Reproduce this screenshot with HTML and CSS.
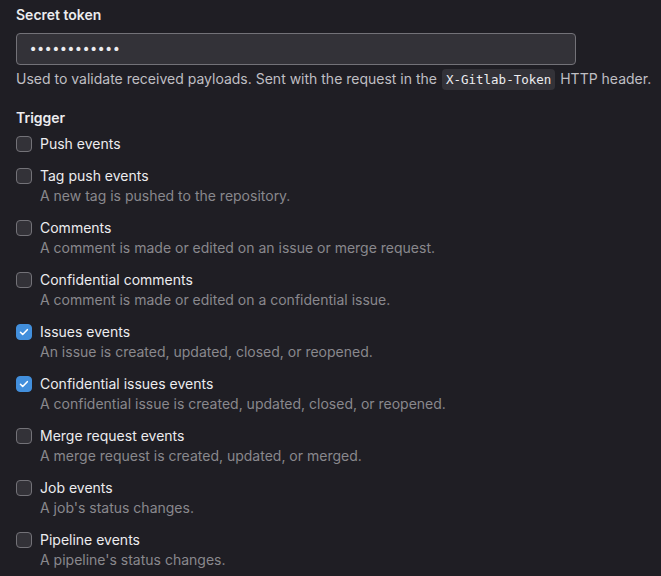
FILE: index.html
```html
<!DOCTYPE html>
<html>
<head>
<meta charset="utf-8">
<link rel="stylesheet" href="styles.css">
</head>
<body>
<div class="page">
  <div class="group">
    <label class="group-label">Secret token</label>
    <input class="field" type="password" value="••••••••••••" readonly>
    <p class="help">Used to validate received payloads. Sent with the request in the <code>X-Gitlab-Token</code> HTTP header.</p>
  </div>
  <div class="group trigger">
    <div class="group-label">Trigger</div>
    <ul class="checks">
      <li class="check"><span class="box"></span><div><div class="name">Push events</div></div></li>
      <li class="check"><span class="box"></span><div><div class="name">Tag push events</div><div class="desc">A new tag is pushed to the repository.</div></div></li>
      <li class="check"><span class="box"></span><div><div class="name">Comments</div><div class="desc">A comment is made or edited on an issue or merge request.</div></div></li>
      <li class="check"><span class="box"></span><div><div class="name">Confidential comments</div><div class="desc">A comment is made or edited on a confidential issue.</div></div></li>
      <li class="check"><span class="box on"><svg viewBox="0 0 16 16" width="16" height="16"><path d="M4.5 8.3l2.2 2.2 4.6-4.8" fill="none" stroke="#fff" stroke-width="1.6" stroke-linecap="round" stroke-linejoin="round"/></svg></span><div><div class="name">Issues events</div><div class="desc">An issue is created, updated, closed, or reopened.</div></div></li>
      <li class="check"><span class="box on"><svg viewBox="0 0 16 16" width="16" height="16"><path d="M4.5 8.3l2.2 2.2 4.6-4.8" fill="none" stroke="#fff" stroke-width="1.6" stroke-linecap="round" stroke-linejoin="round"/></svg></span><div><div class="name">Confidential issues events</div><div class="desc">A confidential issue is created, updated, closed, or reopened.</div></div></li>
      <li class="check"><span class="box"></span><div><div class="name">Merge request events</div><div class="desc">A merge request is created, updated, or merged.</div></div></li>
      <li class="check"><span class="box"></span><div><div class="name">Job events</div><div class="desc">A job's status changes.</div></div></li>
      <li class="check"><span class="box"></span><div><div class="name">Pipeline events</div><div class="desc">A pipeline's status changes.</div></div></li>
    </ul>
  </div>
</div>
</body>
</html>
```
FILE: styles.css
```css
html, body {
  margin: 0;
  padding: 0;
  background: #1f1e24;
}
body {
  font-family: Inter, "Noto Sans", "Liberation Sans", sans-serif;
  font-size: 14px;
  line-height: 20px;
  color: #ececef;
}
.page {
  padding: 5px 16px 0 16px;
}
.group-label {
  display: block;
  font-weight: 600;
  color: #ececef;
}
.field {
  display: block;
  box-sizing: border-box;
  width: 560px;
  height: 32px;
  margin-top: 8px;
  padding: 0 12px;
  background: #333238;
  border: 1px solid #737278;
  border-radius: 4px;
  color: #ececef;
  font-family: "DejaVu Sans", sans-serif;
  font-size: 14px;
  letter-spacing: -0.7px;
  outline: none;
}
.help {
  margin: 4px 0 0 0;
  color: #bfbfc3;
  white-space: nowrap;
}
.help code {
  font-family: "DejaVu Sans Mono", "Liberation Mono", monospace;
  font-size: 12.5px;
  background: #333238;
  color: #ececef;
  padding: 3px 4px;
  margin: 0 1px;
  border-radius: 4px;
}
.trigger {
  margin-top: 18px;
}
.trigger .group-label {
  margin-bottom: 6px;
}
.checks {
  list-style: none;
  margin: 0;
  padding: 0;
}
.check {
  display: flex;
  gap: 8px;
  margin-bottom: 12px;
}
.box {
  flex: none;
  box-sizing: border-box;
  width: 16px;
  height: 16px;
  margin-top: 2px;
  border: 1px solid #737278;
  border-radius: 4px;
  background: #333238;
  display: flex;
}
.box.on {
  background: #428fdc;
  border-color: #428fdc;
}
.box svg {
  margin: -1px;
}
.name {
  color: #ececef;
}
.desc {
  color: #89888d;
}
```
